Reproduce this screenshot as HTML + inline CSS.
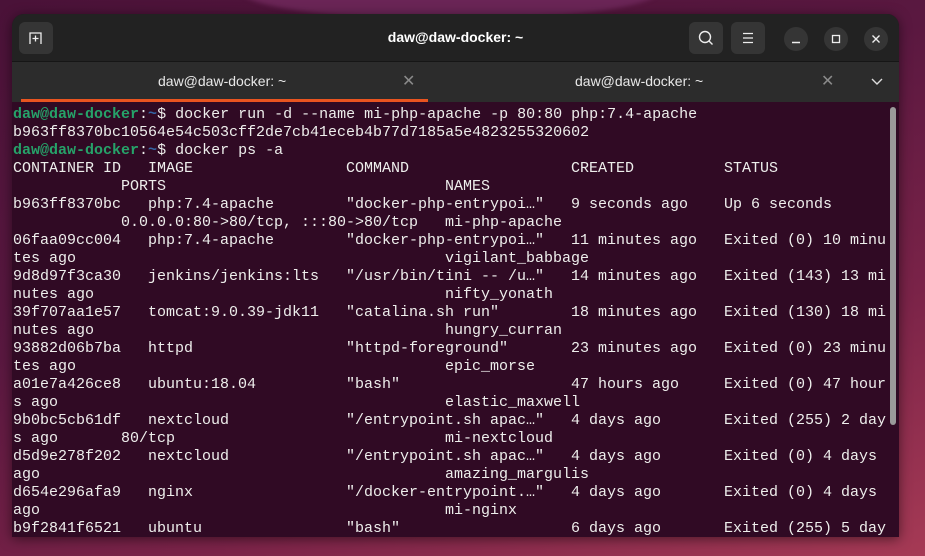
<!DOCTYPE html>
<html><head><meta charset="utf-8"><style>
*{margin:0;padding:0;box-sizing:border-box}
html,body{width:925px;height:556px;overflow:hidden}
body{background:linear-gradient(160deg,#4a1238 0%,#5a1840 40%,#7a2348 70%,#a63a55 100%);font-family:"Liberation Sans",sans-serif;position:relative}
.blob{position:absolute;left:240px;top:-40px;width:420px;height:60px;background:#6a2556;border-radius:50%;filter:blur(2px)}
.win{position:absolute;left:12px;top:14px;width:887px;height:523px;border-radius:12px 12px 0 0;overflow:hidden;background:#300a24;box-shadow:0 2px 12px rgba(0,0,0,.5)}
.hdr{position:absolute;left:0;top:0;width:887px;height:48px;background:#222222;border-bottom:1px solid #161616}
.btn{position:absolute;top:8px;width:34px;height:32px;border-radius:6px;background:#353535}
.circ{position:absolute;top:13px;width:24px;height:24px;border-radius:50%;background:#353535}
.title{position:absolute;left:0;width:887px;top:15px;text-align:center;color:#fff;font-weight:bold;font-size:14px}
.tabs{position:absolute;left:0;top:48px;width:887px;height:40px;background:#2c2c2c}
.tt{position:absolute;top:11px;color:#e8e8e8;font-size:14px}
.x{position:absolute;top:9px;color:#8a8a8a;font-size:16px}
.ul{position:absolute;left:9px;top:37px;width:407px;height:3px;background:#e95420}
.term{position:absolute;left:1px;top:92px;font-family:"Liberation Mono",monospace;font-size:15px;color:#eeeeec}
.r{position:relative;height:18px;line-height:18px;width:880px}
.r span{position:absolute;top:0;white-space:pre}
.g{color:#26a269;font-weight:bold}.b{color:#3465a4;font-weight:bold}
.sb{position:absolute;left:878px;top:93px;width:6px;height:318px;border-radius:3px;background:#9a9a9a}
</style></head><body>
<div class="blob"></div>
<div class="win">
 <div class="hdr">
  <div class="btn" style="left:7px"><svg width="34" height="32"><path d="M11 22V11h11v11M13.5 16.5h6M16.5 13.5v6" stroke="#eee" stroke-width="1.3" fill="none"/></svg></div>
  <div class="title">daw@daw-docker: ~</div>
  <div class="btn" style="left:677px"><svg width="34" height="32"><circle cx="16" cy="15" r="5.5" stroke="#eee" stroke-width="1.4" fill="none"/><path d="M20 19l3.5 3.5" stroke="#eee" stroke-width="1.4"/></svg></div>
  <div class="btn" style="left:719px"><svg width="34" height="32"><path d="M12 11.5h10M12 16h10M12 20.5h10" stroke="#eee" stroke-width="1.3"/></svg></div>
  <div class="circ" style="left:772px"><svg width="24" height="24"><path d="M8 15.5h8" stroke="#eee" stroke-width="1.4"/></svg></div>
  <div class="circ" style="left:812px"><svg width="24" height="24"><rect x="8.5" y="8.5" width="7" height="7" stroke="#eee" stroke-width="1.3" fill="none"/></svg></div>
  <div class="circ" style="left:852px"><svg width="24" height="24"><path d="M8.5 8.5l7 7M15.5 8.5l-7 7" stroke="#eee" stroke-width="1.4"/></svg></div>
 </div>
 <div class="tabs">
  <div class="tt" style="left:146px">daw@daw-docker: ~</div>
  <div class="x" style="left:390px">✕</div>
  <div class="tt" style="left:563px">daw@daw-docker: ~</div>
  <div class="x" style="left:809px">✕</div>
  <svg style="position:absolute;left:858px;top:14px" width="14" height="12"><path d="M2 3l5 5 5-5" stroke="#ddd" stroke-width="1.4" fill="none"/></svg>
  <div class="ul"></div>
 </div>
 <div class="term">
<div class="r"><span style="left:0"><b class="g">daw@daw-docker</b>:<b class="b">~</b>$ docker run -d --name mi-php-apache -p 80:80 php:7.4-apache</span></div>
<div class="r"><span style="left:0">b963ff8370bc10564e54c503cff2de7cb41eceb4b77d7185a5e4823255320602</span></div>
<div class="r"><span style="left:0"><b class="g">daw@daw-docker</b>:<b class="b">~</b>$ docker ps -a</span></div>
<div class="r"><span style="left:0">CONTAINER ID</span><span style="left:135px">IMAGE</span><span style="left:333px">COMMAND</span><span style="left:558px">CREATED</span><span style="left:711px">STATUS</span></div>
<div class="r"><span style="left:108px">PORTS</span><span style="left:432px">NAMES</span></div>
<div class="r"><span style="left:0">b963ff8370bc</span><span style="left:135px">php:7.4-apache</span><span style="left:333px">"docker-php-entrypoi…"</span><span style="left:558px">9 seconds ago</span><span style="left:711px">Up 6 seconds</span></div>
<div class="r"><span style="left:108px">0.0.0.0:80-&gt;80/tcp, :::80-&gt;80/tcp</span><span style="left:432px">mi-php-apache</span></div>
<div class="r"><span style="left:0">06faa09cc004</span><span style="left:135px">php:7.4-apache</span><span style="left:333px">"docker-php-entrypoi…"</span><span style="left:558px">11 minutes ago</span><span style="left:711px">Exited (0) 10 minu</span></div>
<div class="r"><span style="left:0">tes ago</span><span style="left:432px">vigilant_babbage</span></div>
<div class="r"><span style="left:0">9d8d97f3ca30</span><span style="left:135px">jenkins/jenkins:lts</span><span style="left:333px">"/usr/bin/tini -- /u…"</span><span style="left:558px">14 minutes ago</span><span style="left:711px">Exited (143) 13 mi</span></div>
<div class="r"><span style="left:0">nutes ago</span><span style="left:432px">nifty_yonath</span></div>
<div class="r"><span style="left:0">39f707aa1e57</span><span style="left:135px">tomcat:9.0.39-jdk11</span><span style="left:333px">"catalina.sh run"</span><span style="left:558px">18 minutes ago</span><span style="left:711px">Exited (130) 18 mi</span></div>
<div class="r"><span style="left:0">nutes ago</span><span style="left:432px">hungry_curran</span></div>
<div class="r"><span style="left:0">93882d06b7ba</span><span style="left:135px">httpd</span><span style="left:333px">"httpd-foreground"</span><span style="left:558px">23 minutes ago</span><span style="left:711px">Exited (0) 23 minu</span></div>
<div class="r"><span style="left:0">tes ago</span><span style="left:432px">epic_morse</span></div>
<div class="r"><span style="left:0">a01e7a426ce8</span><span style="left:135px">ubuntu:18.04</span><span style="left:333px">"bash"</span><span style="left:558px">47 hours ago</span><span style="left:711px">Exited (0) 47 hour</span></div>
<div class="r"><span style="left:0">s ago</span><span style="left:432px">elastic_maxwell</span></div>
<div class="r"><span style="left:0">9b0bc5cb61df</span><span style="left:135px">nextcloud</span><span style="left:333px">"/entrypoint.sh apac…"</span><span style="left:558px">4 days ago</span><span style="left:711px">Exited (255) 2 day</span></div>
<div class="r"><span style="left:0">s ago</span><span style="left:108px">80/tcp</span><span style="left:432px">mi-nextcloud</span></div>
<div class="r"><span style="left:0">d5d9e278f202</span><span style="left:135px">nextcloud</span><span style="left:333px">"/entrypoint.sh apac…"</span><span style="left:558px">4 days ago</span><span style="left:711px">Exited (0) 4 days</span></div>
<div class="r"><span style="left:0">ago</span><span style="left:432px">amazing_margulis</span></div>
<div class="r"><span style="left:0">d654e296afa9</span><span style="left:135px">nginx</span><span style="left:333px">"/docker-entrypoint.…"</span><span style="left:558px">4 days ago</span><span style="left:711px">Exited (0) 4 days</span></div>
<div class="r"><span style="left:0">ago</span><span style="left:432px">mi-nginx</span></div>
<div class="r"><span style="left:0">b9f2841f6521</span><span style="left:135px">ubuntu</span><span style="left:333px">"bash"</span><span style="left:558px">6 days ago</span><span style="left:711px">Exited (255) 5 day</span></div>
 </div>
 <div class="sb"></div>
</div>
</body></html>
